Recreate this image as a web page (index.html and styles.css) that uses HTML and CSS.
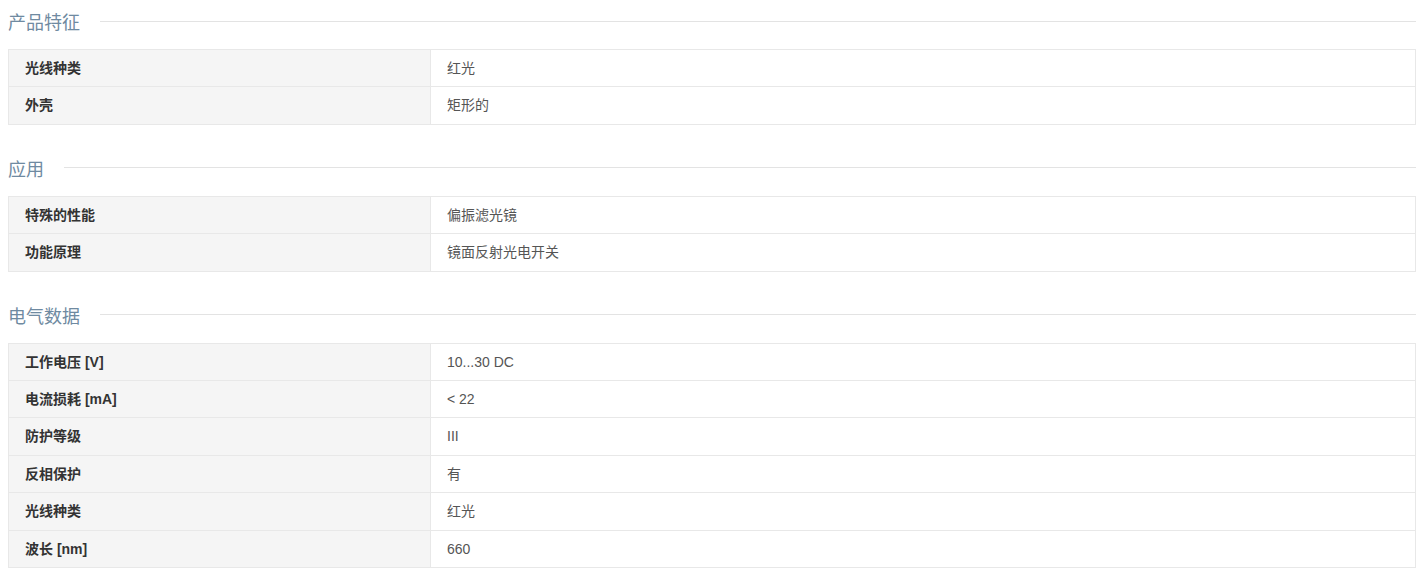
FILE: index.html
```html
<!DOCTYPE html>
<html lang="zh-CN">
<head>
    <meta charset="UTF-8">
    <meta name="viewport" content="width=device-width, initial-scale=1.0">
    <title>产品参数</title>
    <link rel="stylesheet" href="styles.css">
</head>
<body>
    <div class="spec-group">
        <h3 class="spec-title">产品特征</h3>
        <table class="spec-table">
            <tr><th>光线种类</th><td>红光</td></tr>
            <tr><th>外壳</th><td>矩形的</td></tr>
        </table>
    </div>

    <div class="spec-group">
        <h3 class="spec-title">应用</h3>
        <table class="spec-table">
            <tr><th>特殊的性能</th><td>偏振滤光镜</td></tr>
            <tr><th>功能原理</th><td>镜面反射光电开关</td></tr>
        </table>
    </div>

    <div class="spec-group">
        <h3 class="spec-title">电气数据</h3>
        <table class="spec-table">
            <tr><th>工作电压 [V]</th><td>10...30 DC</td></tr>
            <tr><th>电流损耗 [mA]</th><td>&lt; 22</td></tr>
            <tr><th>防护等级</th><td>III</td></tr>
            <tr><th>反相保护</th><td>有</td></tr>
            <tr><th>光线种类</th><td>红光</td></tr>
            <tr><th>波长 [nm]</th><td>660</td></tr>
        </table>
    </div>
</body>
</html>
```

FILE: styles.css
```css
body {
    margin: 0;
    padding: 8px 7px 0 8px;
    font-family: Arial, "Liberation Sans", "Noto Sans CJK SC", sans-serif;
    color: #333;
    background-color: #fff;
}

.spec-group {
    margin-bottom: 30px;
}

.spec-title {
    display: flex;
    align-items: center;
    margin: 0 0 15px 0;
    height: 26px;
    font-size: 18px;
    font-weight: normal;
    color: #6f8aa1;
}

.spec-title::after {
    content: "";
    flex: 1;
    height: 1px;
    margin-left: 20px;
    background-color: #e3e3e3;
}

.spec-table {
    width: 100%;
    border-collapse: collapse;
    font-size: 14px;
}

.spec-table th,
.spec-table td {
    border: 1px solid #e8e8e8;
    padding: 8px 16px;
    line-height: 20.4px;
    text-align: left;
}

.spec-table th {
    width: 389px;
    background-color: #f5f5f5;
    font-weight: bold;
    color: #333;
}

.spec-table td {
    color: #555;
}
```
